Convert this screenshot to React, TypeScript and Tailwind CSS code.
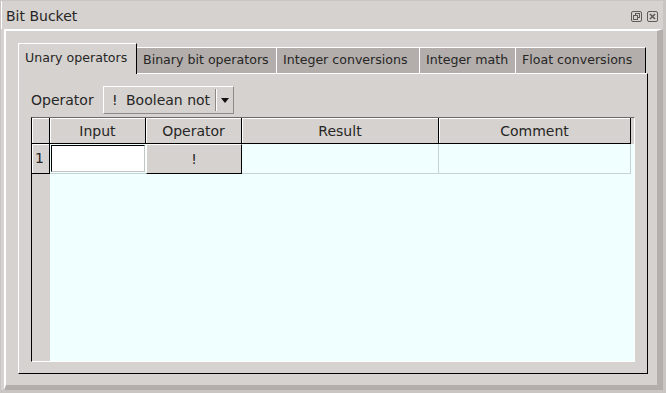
import React from "react"

const font = { fontFamily: '"DejaVu Sans", "Liberation Sans", sans-serif' }

function RestoreIcon() {
  return (
    <svg width="11" height="11" viewBox="0 0 11 11" fill="none" stroke="#5f5b59" strokeWidth="1">
      <rect x="0.5" y="0.5" width="10" height="10" rx="1.5" />
      <rect x="4.5" y="2.5" width="4" height="4" />
      <rect x="2.5" y="4.5" width="4" height="4" fill="#d6d2cf" />
    </svg>
  )
}

function CloseIcon() {
  return (
    <svg width="11" height="11" viewBox="0 0 11 11" fill="none" stroke="#5f5b59">
      <rect x="0.5" y="0.5" width="10" height="10" rx="1.5" strokeWidth="1" />
      <path d="M3 3 L8 8 M8 3 L3 8" strokeWidth="1.6" />
    </svg>
  )
}

const tabs = [
  { label: "Binary bit operators", w: "w-[140px]", last: false },
  { label: "Integer conversions", w: "w-[143px]", last: false },
  { label: "Integer math", w: "w-[96px]", last: false },
  { label: "Float conversions", w: "w-[130px]", last: true },
]

export default function App() {
  return (
    <div
      className="w-[666px] h-[393px] bg-[#d6d2cf] flex flex-col border-l border-t border-l-[#c9c5c2] border-t-[#c9c5c2] border-r-[3px] border-b-[3px] border-r-[#c9c5c2] border-b-[#c9c5c2] text-[#262626]"
      style={font}
    >
      {/* Title bar */}
      <div className="h-[28px] flex items-center justify-between pl-[5px] pr-[5px] shadow-[inset_1px_0_0_#ffffff]">
        <span className="text-[14px] leading-none mt-[2px]">Bit Bucket</span>
        <div className="flex items-center gap-[5px] mt-[2px]">
          <RestoreIcon />
          <CloseIcon />
        </div>
      </div>

      {/* Inner panel */}
      <div className="flex-1 ml-[3px] flex flex-col border-t-2 border-l-2 border-t-white border-l-white border-r-[6px] border-b-[5px] border-r-[#b3aeab] border-b-[#b3aeab] pl-[12px] pt-[12px] pr-[9px] pb-[11px]">
        {/* Tab strip */}
        <div className="h-[30px] flex items-end text-[12.6px]">
          <div className="relative z-10 -mb-px h-[31px] w-[119px] bg-[#d6d2cf] border-t border-l border-t-white border-l-white border-r border-r-black flex items-center pl-[6px] pb-[2px]">
            Unary operators
          </div>
          {tabs.map((t) => (
            <div
              key={t.label}
              className={`h-[26px] ${t.w} bg-[#b3aeab] border-t border-t-white border-r ${
                t.last ? "border-r-black" : "border-r-white"
              } flex items-center pl-[6px] pb-[1px]`}
            >
              {t.label}
            </div>
          ))}
        </div>

        {/* Tab pane */}
        <div className="flex-1 flex flex-col border-t border-l border-t-white border-l-white border-r border-b border-r-black border-b-black pl-[12px] pt-[12px] pr-[12px] pb-[11px] text-[14px]">
          {/* Operator row */}
          <div className="flex items-center h-[28px]">
            <span className="w-[72px]">Operator</span>
            <div className="h-[28px] w-[131px] flex items-center border-t border-l border-t-white border-l-white border-r border-b border-r-[#8e8a87] border-b-[#8e8a87]">
              <span className="pl-[8px] w-[22px]">!</span>
              <span className="w-[89px] whitespace-nowrap overflow-hidden">Boolean not</span>
              <span className="h-[22px] w-px bg-[#8e8a87]" />
              <span className="h-[22px] w-px bg-white" />
              <svg width="8" height="5" viewBox="0 0 8 5" className="ml-[4px]">
                <path d="M0 0 H8 L4 5 Z" fill="#111" />
              </svg>
            </div>
          </div>

          {/* Table */}
          <div className="mt-[3px] h-[245px] flex flex-col border-t border-l border-t-[#6d6966] border-l-black border-r border-b border-r-white border-b-white">
            {/* Header */}
            <div className="h-[26px] flex shrink-0">
              <div className="w-[18px] border-r border-b border-black shadow-[inset_1px_1px_0_#ffffff]" />
              {[
                ["Input", "w-[96px]"],
                ["Operator", "w-[96px]"],
                ["Result", "w-[197px]"],
                ["Comment", "w-[192px]"],
              ].map(([label, w]) => (
                <div
                  key={label}
                  className={`${w} border-r border-b border-black shadow-[inset_1px_1px_0_#ffffff] flex items-center justify-center pt-[1px]`}
                >
                  {label}
                </div>
              ))}
              <div className="flex-1" />
            </div>

            {/* Row 1 */}
            <div className="h-[30px] flex shrink-0">
              <div className="w-[18px] border-r border-b border-black shadow-[inset_1px_1px_0_#ffffff] flex items-center pl-[3px]">
                1
              </div>
              <div className="w-[96px] bg-[#f0ffff] border-b border-b-[#c8d4d4] p-px">
                <div className="h-full bg-white border-t border-l border-t-black border-l-black border-r border-b border-r-[#c8c4c1] border-b-[#c8c4c1]" />
              </div>
              <div className="w-[96px] border-t border-l border-t-white border-l-white border-r border-b border-black flex items-center justify-center">
                !
              </div>
              <div className="w-[197px] bg-[#f0ffff] border-r border-b border-[#c8d4d4]" />
              <div className="w-[192px] bg-[#f0ffff] border-r border-b border-[#c8d4d4]" />
              <div className="flex-1 bg-[#f0ffff]" />
            </div>

            {/* Empty body */}
            <div className="flex-1 flex">
              <div className="w-[18px]" />
              <div className="flex-1 bg-[#f0ffff]" />
            </div>
          </div>
        </div>
      </div>
    </div>
  )
}
